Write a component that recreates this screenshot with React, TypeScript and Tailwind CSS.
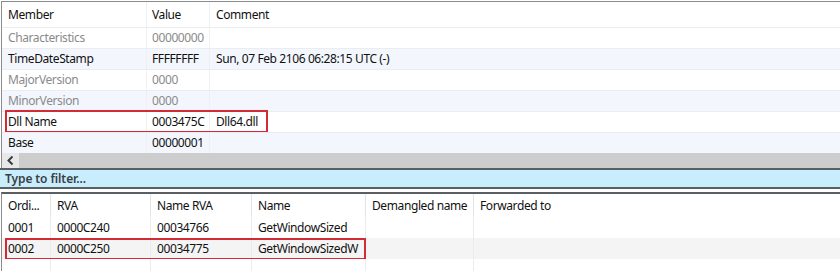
import React from 'react'

const font = { fontFamily: '"Noto Sans", "Open Sans", sans-serif' }

export default function App() {
  const members = [
    { name: 'Characteristics', value: '00000000', comment: '', dim: true },
    { name: 'TimeDateStamp', value: 'FFFFFFFF', comment: 'Sun, 07 Feb 2106 06:28:15 UTC (-)', dim: false },
    { name: 'MajorVersion', value: '0000', comment: '', dim: true },
    { name: 'MinorVersion', value: '0000', comment: '', dim: true },
    { name: 'Dll Name', value: '0003475C', comment: 'Dll64.dll', dim: false, mark: true },
    { name: 'Base', value: '00000001', comment: '', dim: false },
  ]

  const exports = [
    { ord: '0001', rva: '0000C240', nameRva: '00034766', name: 'GetWindowSized' },
    { ord: '0002', rva: '0000C250', nameRva: '00034775', name: 'GetWindowSizedW', mark: true },
    { ord: '', rva: '', nameRva: '', name: '' },
  ]

  const exportCols = 'grid grid-cols-[49px_100px_101px_114px_108px_1fr]'

  return (
    <div className="w-[840px] h-[271px] bg-white overflow-hidden text-[12px] tracking-[-0.4px] text-[#111]" style={font}>
      {/* Top table */}
      <div className="mt-px ml-px border-t border-l border-[#8c8c8c]">
        <div className="grid grid-cols-[145px_63px_1fr] h-[25px] items-center">
          <div className="pl-[6px] h-full flex items-center border-r border-[#f0f0f0]">Member</div>
          <div className="pl-[5px] h-full flex items-center border-r border-[#f0f0f0]">Value</div>
          <div className="pl-[6px]">Comment</div>
        </div>
        {members.map((m, i) => (
          <div
            key={m.name}
            className={`relative grid grid-cols-[145px_63px_1fr] h-[21px] items-center border-t border-[#eaecef] ${i % 2 === 1 ? 'bg-[#f3f7fd]' : 'bg-white'} ${m.dim ? 'text-[#8a8a8a]' : 'text-[#111]'}`}
          >
            <div className="pl-[6px] h-full flex items-center border-r border-[#eef0f2]">{m.name}</div>
            <div className="pl-[5px] h-full flex items-center border-r border-[#eef0f2]">{m.value}</div>
            <div className="pl-[6px] whitespace-nowrap">{m.comment}</div>
            {m.mark && (
              <div className="absolute left-[3px] top-[-2px] w-[263px] h-[23px] border-2 border-[#d42a35]" />
            )}
          </div>
        ))}
        {/* Horizontal scrollbar */}
        <div className="flex h-[15px]">
          <div className="w-[17px] bg-[#e8e8e8] flex items-center justify-center">
            <svg width="9" height="11" viewBox="0 0 9 11">
              <path d="M6.5 1.5 L2.5 5.5 L6.5 9.5" fill="none" stroke="#3c3c3c" strokeWidth="2" />
            </svg>
          </div>
          <div className="flex-1 bg-[#cdcdcd]" />
        </div>
      </div>

      {/* Filter */}
      <div className="border-y-2 border-[#5a5f63] bg-[#c8eefd] h-[21px] flex items-center pl-[5px]">
        <span className="font-semibold tracking-[-0.1px] text-[#3b3f44]">Type to filter...</span>
      </div>

      {/* Bottom table */}
      <div className="mt-[3px] ml-px border-t-2 border-l border-[#5a5f63] border-l-[#8c8c8c]">
        <div className={`${exportCols} h-[23px] items-center`}>
          {['Ordi...', 'RVA', 'Name RVA', 'Name', 'Demangled name', 'Forwarded to'].map((h, i) => (
            <div key={h} className={`pl-[6px] h-full flex items-center whitespace-nowrap ${i < 5 ? 'border-r border-[#e4e4e4]' : ''}`}>
              {h}
            </div>
          ))}
        </div>
        {exports.map((e, i) => (
          <div
            key={i}
            className={`relative ${exportCols} h-[21px] items-center ${i % 2 === 1 ? 'bg-[#f4f4f4]' : 'bg-white'}`}
          >
            {[e.ord, e.rva, e.nameRva, e.name, '', ''].map((c, j) => (
              <div key={j} className={`pl-[6px] h-full flex items-center whitespace-nowrap ${j < 5 ? 'border-r border-[#ececec]' : ''}`}>
                {c}
              </div>
            ))}
            {e.mark && (
              <div className="absolute left-[3px] top-0 w-[361px] h-[22px] border-2 border-[#d42a35]" />
            )}
          </div>
        ))}
      </div>
    </div>
  )
}
